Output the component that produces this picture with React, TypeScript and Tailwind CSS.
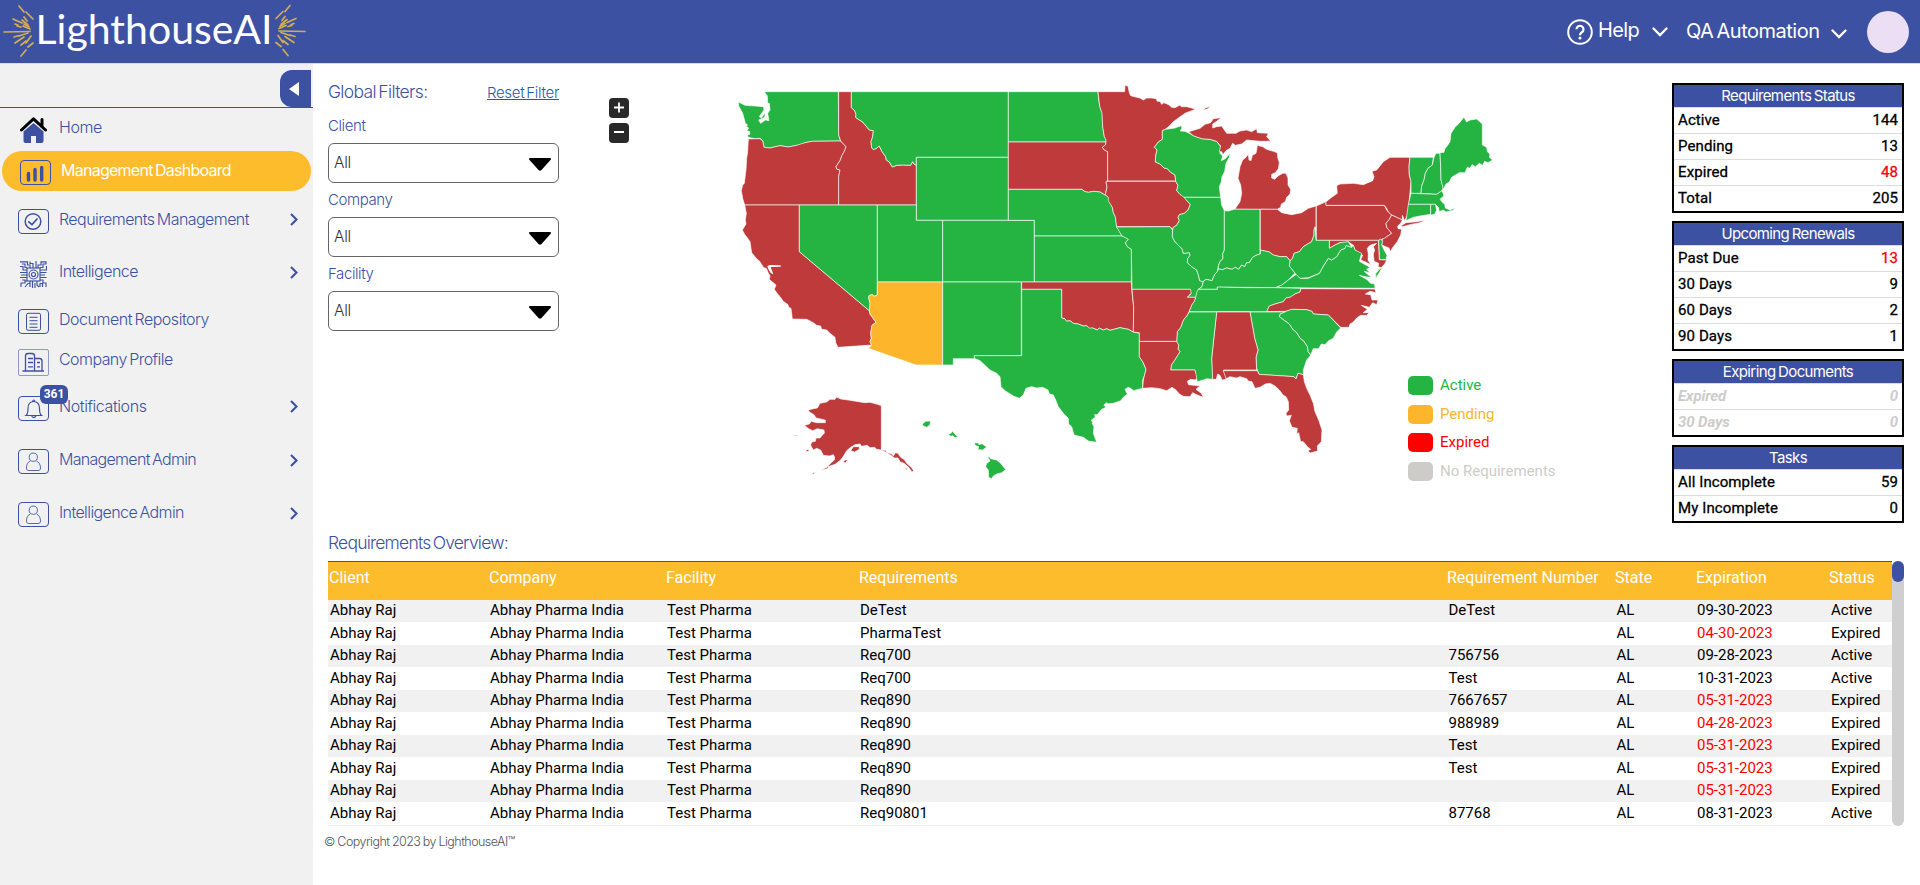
import React from "react";

const GREEN = "#25b441";
const RED = "#be3a3b";
const AMBER = "#fdb52b";

type Region = { dx: number; dy: number; states: [string, string][] };

const regions: Region[] = [
  {
    dx: 0,
    dy: 0,
    states: [
      [GREEN, "133,65 355,65 356,195 362,213 277,214 255,218 245,224 230,226 205,231 180,227 150,234 132,232 128,212 120,205 105,206 85,202 82,196 90,192 88,184 80,182 86,174 80,170 82,164 76,160 68,130 56,108 56,96 75,106 105,108 130,110 132,120 118,140 124,144 136,128 134,142 116,150 122,160 136,150 147,152 143,130 150,120 148,100 143,100 142,78"],
      [RED, "85,207 120,206 128,213 132,232 150,234 180,227 205,231 230,226 255,218 277,214 362,213 378,230 374,242 366,256 360,272 348,290 350,297 360,300 356,320 356,405 74,405 68,385 64,362 68,345 73,340 76,315 78,300 80,265 83,245"],
      [RED, "356,65 394,65 394,113 404,122 408,133 407,142 418,150 428,156 438,168 448,180 460,182 458,200 453,215 455,234 460,238 468,236 478,228 486,245 497,260 499,270 508,276 517,291 530,286 550,285 572,286 578,275 582,282 589,286 589,405 356,405 356,320 360,300 350,297 348,290 360,272 366,256 374,242 378,230 362,213 356,195"],
      [GREEN, "394,65 865,65 865,262 589,262 589,286 582,282 578,275 572,286 550,285 530,286 517,291 508,276 499,270 497,260 486,245 478,228 468,236 460,238 455,234 453,215 458,200 460,182 448,180 438,168 428,156 418,150 407,142 408,133 404,122 394,113"],
      [GREEN, "589,262 865,262 865,451 589,451"],
      [RED, "74,405 238,405 238,545 448,722 450,732 468,757 456,766 452,790 454,805 450,815 455,825 354,832 347,818 345,802 330,790 320,780 305,778 302,768 290,766 280,758 260,748 217,747 213,715 206,712 204,704 190,694 180,680 170,668 163,658 168,645 158,637 148,628 150,618 143,605 140,596 130,592 120,575 108,564 95,548 90,515 80,500 75,495 67,480 78,462 76,450 79,430"],
      [GREEN, "238,405 472,405 472,675 462,679 458,674 448,676 446,682 450,700 450,724 238,545"],
      [GREEN, "472,405 589,405 589,451 668,451 668,636 472,636"],
      [GREEN, "668,451 943,451 943,636 668,636"],
      [AMBER, "472,636 668,636 668,885 588,885 445,835 455,825 450,815 454,805 452,790 456,766 468,757 450,732 448,722 450,700 446,682 448,676 458,674 462,679 472,675"],
      [GREEN, "668,636 904,636 904,857 763,857 763,866 700,866 700,885 668,885"],
      [GREEN, "865,65 1134,65 1136,88 1139,108 1147,130 1148,170 1153,200 1159,210 1158,216 865,216"],
      [RED, "865,216 1158,216 1157,224 1147,232 1153,240 1163,245 1163,333 1158,337 1161,352 1157,368 1165,380 1150,372 1140,366 1120,364 1105,367 1095,365 1085,358 865,358"],
      [GREEN, "865,358 1085,358 1095,365 1105,367 1120,364 1140,366 1150,372 1165,380 1168,392 1177,412 1180,428 1186,440 1190,470 1198,482 1206,498 943,498 943,451 865,451"],
      [GREEN, "943,498 1206,498 1218,502 1225,508 1216,518 1222,530 1234,538 1234,636 943,636"],
      [RED, "905,636 1234,636 1235,658 1241,710 1240,786 1225,778 1214,776 1200,773 1170,781 1160,776 1150,780 1138,774 1132,780 1118,774 1108,776 1100,767 1090,768 1075,762 1060,760 1050,752 1040,754 1034,746 1025,744 1025,658 905,658"],
    ],
  },
  {
    dx: 180,
    dy: 630,
    states: [
      [GREEN, "725,28 845,28 845,114 854,116 860,124 870,122 880,130 895,132 910,138 920,137 928,144 938,144 952,150 958,144 970,150 980,146 990,151 1020,143 1034,146 1045,148 1060,156 1078,160 1078,230 1088,245 1098,268 1094,285 1088,300 1088,325 1060,332 1054,326 1045,322 1035,328 1042,342 1030,352 1022,362 1000,370 985,371 978,368 972,376 978,382 965,388 958,396 952,404 944,404 946,412 934,420 940,432 936,430 942,440 940,460 950,487 925,483 910,472 882,465 875,440 866,432 865,415 850,400 835,380 828,362 820,345 808,342 804,330 788,322 770,324 755,320 738,325 730,345 718,355 700,348 675,332 663,320 660,290 650,280 630,270 615,256 600,242 583,235 583,227 725,227"],
      [RED, "85,390 100,386 112,384 120,370 140,366 150,358 165,358 170,351 182,357 205,360 235,365 255,368 270,367 290,372 304,377 304,510 290,508 284,502 270,503 262,496 245,499 240,492 225,494 212,502 200,512 192,526 182,540 165,553 150,558 136,566 152,550 163,540 164,532 160,524 148,528 130,526 122,510 110,505 100,510 92,496 95,486 106,484 108,474 120,474 128,464 133,460 132,450 112,446 98,452 86,446 73,436 88,432 94,424 110,428 136,428 136,420 108,414 102,404 88,396"],
      [RED, "212,512 220,500 238,500 238,508 224,516"],
      [RED, "188,546 196,540 204,540 196,548"],
      [RED, "136,564 148,558 142,566 126,570 118,573"],
      [RED, "97,580 108,576 100,583"],
      [RED, "36,464 46,466 56,468 46,468"],
      [RED, "304,510 316,511 322,518 334,521 340,528 346,518 354,520 362,532 372,538 382,552 394,562 401,572 396,576 386,562 372,550 360,545 354,534 344,534 330,524 318,517"],
      [RED, "358,548 362,556 358,552"],
      [RED, "374,562 384,568 380,570"],
      [RED, "78,511 84,508 88,514 80,515"],
      [GREEN, "427,433 436,424 452,423 450,434 441,442 430,438"],
      [GREEN, "505,462 513,460 517,453 524,461 534,472 524,473 519,467 512,469"],
      [GREEN, "584,488 595,489 597,494 606,491 620,501 608,510 594,509 596,500 585,496"],
      [GREEN, "626,528 632,536 650,540 662,550 677,569 665,578 650,582 640,588 635,596 626,592 625,570 617,560 620,550 630,543 625,533"],
    ],
  },
  {
    dx: 840,
    dy: 0,
    states: [
      [RED, "294,65 374,65 375,46 384,48 388,68 392,77 410,82 420,84 430,90 440,84 455,84 468,86 472,94 480,94 485,103 492,98 506,104 515,112 525,113 540,105 544,110 560,110 587,117 575,122 555,130 538,142 520,155 508,168 497,177 487,182 487,208 475,216 463,232 471,240 467,258 466,276 480,282 492,294 502,296 512,307 525,315 527,333 323,333 323,245 313,240 307,232 317,224 318,210 313,200 308,170 306,130 299,108"],
      [RED, "318,334 527,334 534,346 530,362 540,373 552,378 562,394 571,403 564,420 553,430 538,434 534,442 538,452 530,466 520,472 518,478 510,470 350,470 346,440 340,428 337,412 325,392 325,382 316,374 321,352"],
      [GREEN, "350,471 510,470 518,480 517,500 524,514 535,526 546,536 550,550 568,548 570,556 563,566 562,578 575,590 590,600 596,618 599,632 610,635 606,650 595,658 590,682 562,682 573,672 570,658 396,658 394,538 382,530 376,518 385,508 366,498 358,485"],
      [GREEN, "487,182 497,178 525,174 543,167 546,174 541,183 555,184 568,190 580,197 605,206 630,208 650,214 662,230 660,250 668,258 664,272 676,266 690,250 688,262 678,280 674,305 666,320 664,335 658,350 662,382 552,382 540,373 530,362 534,346 527,334 525,315 512,307 502,296 492,294 480,282 466,276 467,258 471,240 463,232 475,216 487,208"],
      [RED, "566,185 600,175 615,163 632,158 640,146 664,143 650,154 638,162 638,174 650,170 665,168 680,190 708,190 720,183 740,180 755,185 770,176 772,188 805,190 800,200 812,213 795,214 780,214 740,210 725,222 706,226 698,220 690,235 678,242 668,255 666,246 658,244 662,228 650,214 630,208 605,206 580,197"],
      [RED, "608,121 618,113 632,109 622,117"],
      [GREEN, "552,382 662,382 665,405 673,422 673,540 668,552 669,566 660,574 655,588 652,605 645,612 636,632 618,628 608,635 599,632 596,618 590,600 575,590 562,578 563,566 570,556 568,548 550,550 546,536 535,526 524,514 517,500 518,480 520,472 530,466 538,452 534,442 538,434 553,430 564,420 571,403 562,394"],
      [GREEN, "673,422 685,423 705,417 780,417 780,552 768,556 758,562 748,578 740,578 734,590 725,585 716,598 706,592 696,598 680,594 668,599 655,597 655,588 660,574 669,566 668,552 673,540"],
      [RED, "705,417 720,395 725,370 722,345 714,325 720,290 728,270 738,262 745,252 747,270 753,272 757,256 768,250 770,240 772,226 788,230 800,238 820,244 832,248 833,262 838,278 835,296 826,308 815,313 815,324 824,328 834,318 848,310 858,310 864,325 864,345 872,358 870,372 860,382 856,395 844,402 842,412 832,418"],
    ],
  },
  {
    dx: 1560,
    dy: 90,
    states: [
      [RED, "61,328 112,328 125,338 155,344 185,338 205,325 228,318 228,380 222,390 222,405 215,425 200,434 190,440 178,455 162,460 158,475 150,482 140,470 120,470 100,465 88,456 61,450"],
      [RED, "229,318 258,305 258,316 433,316 440,330 445,336 455,345 448,358 438,370 440,382 455,400 443,408 435,415 415,421 229,421"],
      [RED, "258,305 275,292 292,280 290,257 300,252 340,250 370,254 398,242 402,230 396,214 410,210 430,185 450,172 510,172 507,200 508,225 513,245 508,300 503,345 494,362 487,346 487,360 455,345 445,336 440,325 433,316 258,316"],
      [RED, "482,378 498,368 530,365 557,360 540,368 510,374 488,380"],
      [RED, "455,345 487,360 482,370 473,378 474,386 485,388 482,405 472,425 460,440 450,455 447,444 425,435 427,418 438,412 455,400 440,382 438,370 448,358"],
      [GREEN, "510,172 580,172 577,195 564,205 556,220 552,240 545,258 543,280 513,280 513,245 508,225 507,200"],
      [GREEN, "582,172 588,160 600,160 602,200 603,240 610,262 606,272 590,283 543,280 545,258 552,240 556,220 564,205 577,195"],
      [GREEN, "600,158 612,157 614,147 622,137 630,125 633,100 645,82 655,72 672,52 680,66 690,60 710,57 727,72 727,135 740,142 742,155 750,162 748,172 758,180 744,188 734,184 728,196 718,190 706,200 696,194 690,205 682,202 675,218 658,218 648,224 635,232 628,246 618,252 610,268 603,240 602,200"],
      [GREEN, "513,280 590,283 606,272 612,287 600,298 608,308 614,312 616,324 630,330 643,324 641,330 618,336 610,330 598,335 595,322 586,313 505,313 509,296"],
      [GREEN, "505,313 572,313 572,343 540,348 520,352 498,362"],
      [GREEN, "572,313 586,313 590,330 584,343 572,345"],
      [GREEN, "416,421 422,417 428,424 425,435 435,455 441,466 438,479 418,479"],
      [RED, "268,421 415,421 418,479 440,480 434,492 424,503 414,500 416,490 402,484 400,462 404,450 400,440 410,430 390,436 382,445 385,462 384,480 392,494 375,485 362,480 368,466 355,458 345,450 340,436 325,425 314,428 300,428 285,435 268,445"],
      [GREEN, "105,563 125,555 142,542 170,522 180,535 205,535 238,520 250,498 265,475 275,480 290,470 302,450 315,445 318,436 335,442 340,436 345,450 365,460 358,484 372,492 390,502 380,508 390,518 372,514 394,532 375,530 358,526 380,538 392,550 404,552 405,565"],
      [GREEN, "427,502 418,518 406,536 408,520 418,508"],
      [GREEN, "225,380 228,421 268,421 268,445 285,435 300,428 325,425 335,442 318,436 315,445 302,450 290,470 275,480 265,475 250,498 238,520 205,533 180,535 165,520 148,498 150,482 158,475 162,460 178,455 190,440 200,434 215,425 222,405 222,390"],
      [GREEN, "61,450 88,456 100,465 120,470 140,470 150,482 148,498 165,520 142,542 125,555 105,563 20,562 -68,562 -68,568 -125,568 -114,560 -110,545 -102,538 -84,542 -75,522 -68,515 -65,507 -52,509 -40,504 -24,508 -14,502 -4,508 5,495 14,500 20,488 28,488 38,472 48,466 61,462"],
    ],
  },
  {
    dx: 1200,
    dy: 600,
    states: [
      [GREEN, "235,58 292,58 292,51 380,53 465,53 543,55 540,66 525,72 510,82 498,84 490,95 465,102 448,108 440,125 207,125 215,105 222,95 227,82 230,68"],
      [RED, "543,56 765,57 768,68 750,64 736,72 752,74 756,90 774,90 770,104 758,98 748,112 724,106 742,118 730,128 748,128 740,136 722,136 710,144 700,156 690,162 687,172 662,172 625,135 580,132 576,124 560,119 515,118 498,124 440,125 448,108 465,102 490,95 498,84 510,82 525,72 540,66"],
      [GREEN, "480,132 498,124 515,118 560,119 576,124 580,132 625,135 662,174 650,186 640,205 626,212 615,224 604,222 596,236 580,236 572,254 564,245 562,230 550,212 540,205 530,188 518,178 508,162 494,152 478,140"],
      [GREEN, "390,126 480,126 498,124 480,132 478,140 494,152 508,162 518,178 530,188 540,205 550,212 562,230 564,245 572,256 560,270 555,285 550,300 550,314 534,310 528,327 522,320 417,313 410,295 408,262 414,240 404,205"],
      [RED, "290,126 390,126 404,205 414,240 408,262 410,300 310,300 318,320 318,328 306,330 300,316 293,312 289,328 277,328 275,265"],
      [GREEN, "207,126 290,126 275,265 278,328 260,326 250,330 232,335 226,315 225,300 152,300 154,285 164,270 180,245 174,238 176,226 170,215 172,185 182,172 190,150 200,138"],
      [RED, "310,302 412,302 417,313 522,320 528,327 534,310 550,314 553,335 560,355 570,375 580,400 585,425 596,450 606,480 604,515 592,528 593,543 570,549 564,542 572,538 562,530 550,515 542,515 536,488 530,492 532,475 516,472 508,452 514,436 500,438 498,430 506,420 505,395 498,380 490,376 478,360 465,348 450,340 436,342 420,352 405,355 396,335 385,333 380,326 360,320 350,324 330,320 318,326"],
      [RED, "58,214 170,214 176,226 174,238 180,245 164,270 154,285 152,300 225,300 230,322 228,330 212,328 202,334 206,344 222,346 240,348 228,358 244,370 250,382 230,374 218,368 210,380 190,379 178,372 168,360 156,352 140,362 120,356 95,353 68,355 70,330 78,298 70,278 58,260"],
      [RED, "36,58 212,58 213,70 202,82 227,82 222,95 215,105 207,125 200,138 190,150 182,172 172,185 170,214 58,214 58,188 40,186 41,110"],
    ],
  },
];

function UsaMap() {
  return (
    <svg className="h-[420px] w-[780px]" viewBox="0 0 2340 1260">
      {regions.map((r, i) => (
        <g key={i} transform={`translate(${r.dx} ${r.dy})`} stroke="#fff" strokeOpacity="0.8" strokeWidth="2.4" strokeLinejoin="round">
          {r.states.map(([fill, pts], j) => (
            <polygon key={j} fill={fill} points={pts} />
          ))}
        </g>
      ))}
      <path d="M142 588L150 585L182 586L182 590L152 591L160 613L152 609L145 597Z" fill="#fff" />
    </svg>
  );
}

const leftRays = [
  [4, 32, 30, 31.5], [19, 6, 24, 12], [13, 19, 22, 23], [15, 43, 24, 37], [21, 56, 26, 50],
  [24, 17, 27, 21], [26, 12, 33, 19], [17, 26, 21, 27], [19, 36, 28, 33], [23, 26, 30, 29],
  [15, 24, 18, 25], [26, 43, 31, 36], [24, 24, 29, 27], [28, 47, 33, 43], [21, 45, 26, 41], [22, 20, 28, 25], [14, 37, 19, 35.5],
];

function Logo() {
  const rays = leftRays.map(([a, b, c, d], i) => <line key={i} x1={a} y1={b} x2={c} y2={d} />);
  return (
    <svg className="h-[63px] w-[310px]" viewBox="0 0 310 63">
      <g stroke="#d3ac53" strokeWidth="1.7" strokeLinecap="round">
        {rays}
        <g transform="translate(309 -0.5) scale(-1 1)">{rays}</g>
      </g>
      <text x="35.500" y="44" fill="#fff" fontFamily="Lato, sans-serif" fontSize="40" textLength="237" lengthAdjust="spacingAndGlyphs">
        LighthouseAI
      </text>
    </svg>
  );
}

const frame = <rect x="0.5" y="0.5" width="30" height="24" rx="3.5" />;

function Icon({ name }: { name: string }) {
  if (name === "home")
    return (
      <svg className="ml-[2px] h-[27px] w-[27px]" viewBox="0 0 27 27">
        <path d="M3.5 14.5L13.5 6L23.5 14.5V24a2 2 0 0 1-2 2H16v-7h-5v7H5.5a2 2 0 0 1-2-2Z" fill="#3d51a3" />
        <path d="M1.5 13L13.5 1.8L25.5 13M22 9V2.5" fill="none" stroke="#000" strokeWidth="3" strokeLinecap="round" strokeLinejoin="round" />
      </svg>
    );
  if (name === "chip")
    return (
      <svg className="ml-[2px] h-[27px] w-[27px]" viewBox="0 0 27 27" fill="none" stroke="#3d51a3" strokeWidth="1.150">
        <rect x="7" y="7" width="13" height="13" />
        <circle cx="13.5" cy="13.5" r="4.5" />
        <circle cx="13.5" cy="13.5" r="2" />
        <path d="M0 .8H7.5V4H10V7M2 3H5V6.5H7M0 5.5H3V9H7M0 11.5H7M1 14H7M0 16.5H7M2 19H5V21M1 26V22H5V20H7M5 26L8 22.5H10V20M10 .5V2.5H13V7M16 0V7M18 7V4H21V.8H26V3H23V6.5H20M26.5 5V9H20M20 11.5H26.5M20 14H25M20 16.5H26.5M20 19H23V22H26V26M10 26V23M12.5 27V20M15 27V22M17 20V24L19 26M20 26V22.5H22.5V26" />
      </svg>
    );
  if (name === "company")
    return (
      <svg className="h-[27px] w-[31px]" viewBox="0 0 31 27" fill="none" stroke="#3d51a3">
        <rect x="0.5" y="0.5" width="30" height="26" rx="1.5" strokeOpacity="0.55" />
        <path d="M4.5 22H26M7.5 22V7q0-2.500 2.500-2.500h4q2.500 0 2.500 2.500V22M17 9.500h4.500q2.500 0 2.500 2.500V22M10 9.500h5M10 13.500h5M10 17.800h5M19 13.500h3M19 17.800h3" strokeWidth="1.3" />
      </svg>
    );
  return (
    <svg className="h-[26px] w-[31px]" viewBox="0 0 31 26" fill="none" stroke="#3d51a3">
      {frame}
      {name === "chart" && <path d="M8.500 13.500V20M15 9.500V20M21.700 7.500V20" strokeWidth="3.4" strokeLinecap="round" />}
      {name === "check" && (
        <g strokeWidth="1.5">
          <circle cx="15" cy="12.500" r="7.800" />
          <path d="M10.800 12.800L14 15.600L19 10" strokeLinecap="round" strokeWidth="1.700" />
        </g>
      )}
      {name === "doc" && (
        <g>
          <rect x="8.500" y="4.300" width="14" height="17" rx="1.500" />
          <path d="M11.500 8.300h8M11.500 11.700h8M11.500 15h8M11.500 18.300h8" />
        </g>
      )}
      {name === "bell" && (
        <path d="M8 19.500H23.500C21.500 18 21.500 16.500 21.500 12.500C21.500 8 19.500 5.500 15.700 5.500C12 5.500 10 8 10 12.500C10 16.500 10 18 8 19.500ZM13.500 19.800q2.200 3.500 4.500 0M14.500 5.500q1.200-3 2.400 0" strokeWidth="1.200" />
      )}
      {name === "user" && (
        <g strokeOpacity="0.85">
          <circle cx="15.300" cy="8.200" r="4.100" />
          <path d="M12.300 12C9.500 13 8.500 16 8.500 19C8.500 21 9.500 21.500 11 21.500H20C21.500 21.500 22.500 21 22.500 19C22.500 16 21.200 13 18.500 12" />
        </g>
      )}
    </svg>
  );
}

const nav = [
  { label: "Requirements Management", icon: "check", row: "h-[57px]", arrow: true, spacing: "tracking-[-0.57px]" },
  { label: "Intelligence", icon: "chip", row: "h-[48px]", arrow: true, spacing: "tracking-[-0.52px]" },
  { label: "Document Repository", icon: "doc", row: "h-[47px]", arrow: false, spacing: "tracking-[-0.48px]" },
  { label: "Company Profile", icon: "company", row: "h-[34px]", arrow: false, spacing: "tracking-[-0.56px]" },
  { label: "Notifications", icon: "bell", row: "h-[59px]", arrow: true, spacing: "tracking-[-0.42px]" },
  { label: "Management Admin", icon: "user", row: "h-[48px]", arrow: true, spacing: "tracking-[-0.7px]" },
  { label: "Intelligence Admin", icon: "user", row: "h-[58px]", arrow: true, spacing: "tracking-[-0.6px]" },
];

function Chevron({ className }: { className: string }) {
  return (
    <svg className={className} viewBox="0 0 16 10" fill="none" stroke="currentColor" strokeWidth="2.300">
      <path d="M1.500 1.500L8 8L14.500 1.500" strokeLinecap="round" />
    </svg>
  );
}

function Sidebar() {
  return (
    <aside className="flex w-[313px] shrink-0 flex-col bg-[#f1f1f1] text-base font-light text-[#3d51a3] [word-spacing:-1.5px]">
      <div className="flex h-11 items-end justify-end border-b border-[#3d51a3] pr-[2px]">
        <div className="flex h-[37px] w-[31px] items-center justify-center rounded-l-xl bg-[#3d51a3] pr-[3px]">
          <svg className="h-[14px] w-[10px]" viewBox="0 0 10 14"><path d="M10 0V14L0 7Z" fill="#fff" /></svg>
        </div>
      </div>
      <div className="flex h-[41px] items-center pl-[18px]">
        <span className="w-[41px] pt-1"><Icon name="home" /></span>
        <span className="pb-[3px] tracking-[-0.42px]">Home</span>
      </div>
      <div className="mt-[2px] mr-[2px] ml-[2px] flex h-10 items-center rounded-full bg-[#fdbc2c] pl-[18px] text-white">
        <span className="w-[41px] pt-[3px]"><Icon name="chart" /></span>
        <span className="pb-[2px] font-normal tracking-[-0.74px]">Management Dashboard</span>
      </div>
      {nav.map((n) => (
        <div key={n.label} className={`flex items-center pl-[18px] pr-[15px] ${n.row}`}>
          <span className="relative w-[41px] shrink-0 pt-1">
            <Icon name={n.icon} />
            {n.icon === "bell" && (
              <span className="absolute -top-[7px] left-[22px] flex h-[19px] w-7 items-center justify-center rounded-md bg-[#3d51a3] font-['Roboto',sans-serif] text-xs font-bold text-white">
                361
              </span>
            )}
          </span>
          <span className={`flex-1 pb-[2px] whitespace-nowrap ${n.spacing}`}>{n.label}</span>
          {n.arrow && (
            <svg className="h-[13px] w-2" viewBox="0 0 8 13" fill="none" stroke="#3d51a3" strokeWidth="2.100"><path d="M1 1L6.500 6.500L1 12" /></svg>
          )}
        </div>
      ))}
    </aside>
  );
}

function Filter({ label }: { label: string }) {
  return (
    <div className="h-[74px]">
      <div className="h-[34px] text-[15px] leading-[33px] font-light tracking-[-0.4px] text-[#3d51a3]">{label}</div>
      <div className="flex h-10 items-center justify-between rounded-md border border-[#666] pr-[7px] pl-[5px] text-[15.500px] font-light text-[#333]">
        <span className="tracking-[-0.3px]">All</span>
        <svg className="mt-[3px] h-[13px] w-[22px]" viewBox="0 0 22 13"><path d="M1 0H21Q23 .5 21 2.500L12.500 12Q11 13.500 9.500 12L1 2.500Q-1 .5 1 0Z" /></svg>
      </div>
    </div>
  );
}

const legend = [
  { label: "Active", box: "bg-[#25b441]", text: "text-[#25b441]" },
  { label: "Pending", box: "bg-[#fdb52b]", text: "text-[#fdb52b]" },
  { label: "Expired", box: "bg-[#ff0000]", text: "text-[#ff0000]" },
  { label: "No Requirements", box: "bg-[#cdccc9]", text: "text-[#cdccc9]" },
];

type Panel = { title: string; muted?: boolean; rows: [string, string, boolean?][] };
const panels: Panel[] = [
  { title: "Requirements Status", rows: [["Active", "144"], ["Pending", "13"], ["Expired", "48", true], ["Total", "205"]] },
  { title: "Upcoming Renewals", rows: [["Past Due", "13", true], ["30 Days", "9"], ["60 Days", "2"], ["90 Days", "1"]] },
  { title: "Expiring Documents", muted: true, rows: [["Expired", "0"], ["30 Days", "0"]] },
  { title: "Tasks", rows: [["All Incomplete", "59"], ["My Incomplete", "0"]] },
];

const cols = "grid grid-cols-[160px_177px_193px_588px_168px_81px_133px_64px]";
const heads = ["Client", "Company", "Facility", "Requirements", "Requirement Number", "State", "Expiration", "Status"];
const data: [string, string, string, string][] = [
  ["DeTest", "DeTest", "09-30-2023", "Active"],
  ["PharmaTest", "", "04-30-2023", "Expired"],
  ["Req700", "756756", "09-28-2023", "Active"],
  ["Req700", "Test", "10-31-2023", "Active"],
  ["Req890", "7667657", "05-31-2023", "Expired"],
  ["Req890", "988989", "04-28-2023", "Expired"],
  ["Req890", "Test", "05-31-2023", "Expired"],
  ["Req890", "Test", "05-31-2023", "Expired"],
  ["Req890", "", "05-31-2023", "Expired"],
  ["Req90801", "87768", "08-31-2023", "Active"],
];

export default function App() {
  return (
    <div className="flex h-[885px] w-[1920px] flex-col overflow-hidden bg-white font-['Inter',sans-serif]">
      <header className="flex h-16 shrink-0 items-center justify-between border-b border-[#e2dccb] bg-[#3d51a3] pr-[11px] text-white">
        <Logo />
        <div className="flex items-center">
          <svg className="h-[26px] w-[26px]" viewBox="0 0 26 26" fill="none" stroke="#fff" strokeWidth="2">
            <circle cx="13" cy="13" r="11.800" />
            <path d="M9.500 10.300a3.500 3.500 0 1 1 5.300 3q-1.800 1.100-1.800 3" strokeWidth="2.200" />
            <circle cx="13" cy="19" r="1.500" fill="#fff" stroke="none" />
          </svg>
          <span className="ml-[5px] w-[54px] pb-[3px] text-xl tracking-[-0.6px]">Help</span>
          <Chevron className="h-[10px] w-[16px]" />
          <span className="ml-[18px] w-[145px] pb-px text-xl tracking-[-0.5px] whitespace-nowrap [word-spacing:-2px]">QA Automation</span>
          <Chevron className="mt-1 h-[10px] w-[16px]" />
          <div className="ml-5 h-[42px] w-[42px] rounded-full bg-[#ecdff5]" />
        </div>
      </header>
      <div className="flex flex-1">
        <Sidebar />
        <main className="flex flex-1 flex-col">
          <section className="flex h-[465px]">
            <div className="ml-[15px] w-[231px] pt-[11px]">
              <div className="flex h-[34px] items-center justify-between font-light whitespace-nowrap text-[#3d51a3] [word-spacing:-2px]">
                <span className="text-[17.500px] tracking-[-0.64px]">Global Filters:</span>
                <span className="pt-[3px] text-[15px] tracking-[-0.3px] text-[#1a5fb4] underline">Reset Filter</span>
              </div>
              <Filter label="Client" />
              <Filter label="Company" />
              <Filter label="Facility" />
            </div>
            <div className="ml-[50px] flex w-5 flex-col gap-[5px] pt-[34px]">
              {["M5 9.500H15M10 4.500V14.500", "M5 9H15"].map((d) => (
                <svg key={d} className="h-5 w-5 rounded bg-[#292929]" viewBox="0 0 20 20"><path d={d} stroke="#fff" strokeWidth="1.800" /></svg>
              ))}
            </div>
            <div className="relative ml-[91px] w-[952px] pt-[6px]">
              <UsaMap />
              <div className="absolute top-[307px] left-[688px] flex flex-col font-['Roboto',sans-serif] text-[15px]">
                {legend.map((l) => (
                  <div key={l.label} className="flex h-[28.700px] items-center gap-[7px]">
                    <span className={`h-[19px] w-[25px] rounded-[5px] ${l.box}`} />
                    <span className={l.text}>{l.label}</span>
                  </div>
                ))}
              </div>
            </div>
            <div className="flex w-[232px] flex-col gap-2 pt-[19px]">
              {panels.map((p) => (
                <div key={p.title} className="border-2 border-black">
                  <div className="h-[22px] bg-[#3d51a3] text-center text-[15px] leading-[22px] tracking-[-0.62px] text-white [word-spacing:-1px]">{p.title}</div>
                  {p.rows.map(([k, v, red]) => (
                    <div
                      key={k}
                      className={`flex h-[26px] items-center justify-between border-t border-[#dcdcdc] px-[4px] font-['Roboto',sans-serif] text-[15px] ${p.muted ? "font-bold tracking-[-0.1px] text-[#cdccc9] italic" : "tracking-[0.1px] text-black [-webkit-text-stroke:0.3px]"}`}
                    >
                      <span>{k}</span>
                      <span className={red ? "text-[#ff0000]" : ""}>{v}</span>
                    </div>
                  ))}
                </div>
              ))}
            </div>
          </section>
          <div className="ml-[15px] h-8 text-[17.500px] leading-[28px] font-light tracking-[-0.78px] text-[#3d51a3] [word-spacing:-2px]">Requirements Overview:</div>
          <section className="ml-[15px] flex h-[265px] w-[1576px]">
            <div className="w-[1564px] border-b border-[#eee] font-['Roboto',sans-serif]">
              <div className={`${cols} h-[39px] border-t border-[#3d51a3] bg-[#fdbc2c] text-base leading-[31px] text-white`}>
                {heads.map((h) => (
                  <span key={h} className="pl-px whitespace-nowrap">{h}</span>
                ))}
              </div>
              {data.map(([req, num, date, status], i) => (
                <div key={i} className={`${cols} text-[15px] text-black ${i % 2 ? "h-[23px] leading-[22px]" : "h-[22px] bg-[#f1f1f1] leading-[21px]"}`}>
                  {["Abhay Raj", "Abhay Pharma India", "Test Pharma", req, num, "AL"].map((t, j) => (
                    <span key={j} className={`whitespace-nowrap ${j > 3 ? "pl-[2.500px]" : "pl-[2px]"}`}>{t}</span>
                  ))}
                  <span className={`pl-[2px] ${date < "06" ? "text-[#ff0000]" : ""}`}>{date}</span>
                  <span className="pl-[3px]">{status}</span>
                </div>
              ))}
            </div>
            <div className="w-3 rounded-full bg-[#d0cfcf]">
              <div className="h-[21px] rounded-full bg-[#3d51a3]" />
            </div>
          </section>
          <footer className="ml-[11px] pt-[7px] text-[12.500px] font-light tracking-[-0.54px] text-[#555] [word-spacing:-0.5px]">© Copyright 2023 by LighthouseAI™</footer>
        </main>
      </div>
    </div>
  );
}
